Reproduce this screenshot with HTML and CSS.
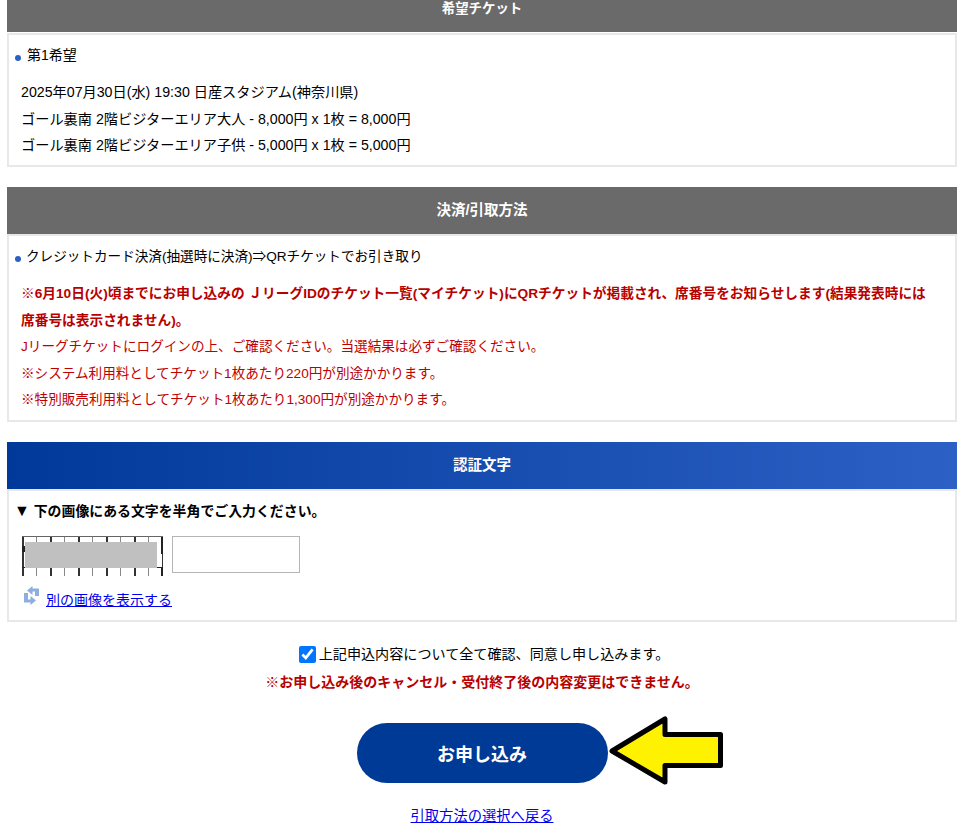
FILE: index.html
```html
<!DOCTYPE html>
<html lang="ja">
<head>
<meta charset="utf-8">
<title>申し込み確認</title>
<link rel="stylesheet" href="styles.css">
</head>
<body>
<main class="page">
  <section class="section">
    <h2 class="head head-narrow">希望チケット</h2>
    <div class="panel panel-ticket">
      <p class="bullet">第1希望</p>
      <div class="detail">
        <p>2025年07月30日(水) 19:30 日産スタジアム(神奈川県)</p>
        <p>ゴール裏南 2階ビジターエリア大人 - 8,000円 x 1枚 = 8,000円</p>
        <p>ゴール裏南 2階ビジターエリア子供 - 5,000円 x 1枚 = 5,000円</p>
      </div>
    </div>
  </section>
  <section class="section">
    <h2 class="head head-wide">決済/引取方法</h2>
    <div class="panel panel-pay">
      <p class="bullet bullet-small">クレジットカード決済(抽選時に決済)⇒QRチケットでお引き取り</p>
      <div class="notes">
        <p class="strong">※6月10日(火)頃までにお申し込みの ＪリーグIDのチケット一覧(マイチケット)にQRチケットが掲載され、席番号をお知らせします(結果発表時には席番号は表示されません)。</p>
        <p>Jリーグチケットにログインの上、ご確認ください。当選結果は必ずご確認ください。</p>
        <p>※システム利用料としてチケット1枚あたり220円が別途かかります。</p>
        <p>※特別販売利用料としてチケット1枚あたり1,300円が別途かかります。</p>
      </div>
    </div>
  </section>
  <section class="section">
    <h2 class="head head-wide head-blue">認証文字</h2>
    <div class="panel panel-captcha">
      <p class="captcha-title"><span class="tri">▼</span> 下の画像にある文字を半角でご入力ください。</p>
      <div class="captcha-row">
        <div class="captcha-img"><div class="captcha-mask"></div></div>
        <input class="captcha-input" type="text" aria-label="認証文字">
      </div>
      <div class="reload">
        <svg class="reload-icon" width="15" height="19" viewBox="0 0 15 19" aria-hidden="true">
          <path fill="#8eaee0" d="M15 10H11V5.500H8.500V9L3 4.500L8.500 0V2.500H15Z"/>
          <path fill="#8eaee0" d="M0 7H4V13.500H6.500V10L12 14.500L6.500 19V16.500H0Z"/>
        </svg>
        <a href="#">別の画像を表示する</a>
      </div>
    </div>
  </section>
  <div class="confirm">
    <label class="agree"><input type="checkbox" checked>上記申込内容について全て確認、同意し申し込みます。</label>
    <p class="warn">※お申し込み後のキャンセル・受付終了後の内容変更はできません。</p>
    <div class="submit-row">
      <button class="submit" type="button">お申し込み</button>
      <svg class="arrow" width="118" height="72" viewBox="0 0 118 72" aria-hidden="true">
        <path d="M5 36L58 4V19.500H113.500V50.500H58V67Z" fill="#fff200" stroke="#000" stroke-width="5" stroke-linejoin="round"/>
      </svg>
    </div>
    <a class="back" href="#">引取方法の選択へ戻る</a>
  </div>
</main>
</body>
</html>
```
FILE: styles.css
```css
* { box-sizing: border-box; }
html, body { margin: 0; padding: 0; background: #fff; overflow: hidden; height: 100%; }
body {
  font-family: "Liberation Sans", "Noto Sans CJK JP", sans-serif;
  font-size: 14px;
  color: #000;
}
p { margin: 0; }
.page { margin: -15px 10px 0 7px; }
.section { margin-bottom: 20px; }
.head {
  margin: 0;
  height: 47px;
  line-height: 46px;
  background: #6a6a6a;
  color: #fff;
  font-size: 14px;
  font-weight: bold;
  text-align: center;
}
.head-narrow { font-size: 13.400px; line-height: 47px; }
.head-wide { font-size: 14.500px; }
.head-blue { background: linear-gradient(90deg, #00399a 0%, #2d60c4 100%); }
.panel { border: 2px solid #e8e8e8; background: #fff; padding: 0 6px; }
.section:first-child .panel { margin-top: 1px; }
.panel-ticket { height: 134px; padding-top: 8px; }
.panel-pay { height: 188px; padding-top: 8px; }
.panel-captcha { height: 133px; padding-top: 8px; }
.bullet { line-height: 24px; padding-left: 12px; position: relative; }
.bullet-small { font-size: 13.600px; padding-left: 11px; line-height: 26px; }
.bullet::before {
  content: "";
  position: absolute;
  left: 0;
  top: 12px;
  width: 6px;
  height: 6px;
  border-radius: 50%;
  background: #2d60c4;
}
.detail { margin-top: 12px; padding-left: 6px; line-height: 26.500px; font-size: 14.200px; }
.notes { margin-top: 11px; padding-left: 6px; line-height: 26.500px; font-size: 13.600px; color: #c00000; }
.strong { font-weight: bold; font-size: 13.700px; color: #b80000; padding-right: 15px; }
.captcha-title { font-weight: bold; line-height: 24px; font-size: 13.900px; }
.tri { font-size: 16px; line-height: 1; margin-left: -1px; }
.captcha-row { display: flex; gap: 10px; margin-top: 13px; padding-left: 7px; }
.captcha-img {
  width: 141px;
  height: 40px;
  padding: 5px 0 0 3px;
  background:
    linear-gradient(#222, #222) right top / 2px 17px no-repeat,
    linear-gradient(#222, #222) right bottom / 2px 9px no-repeat,
    linear-gradient(#222, #222) right 0 bottom 8px / 8px 1px no-repeat,
    linear-gradient(#222, #222) left 0 bottom 8px / 3px 1px no-repeat,
    linear-gradient(#222, #222) left 0 top 9px / 3px 6px no-repeat,
    repeating-linear-gradient(90deg, #333 0 2px, #fff 2px 14px, #888 14px 15px, #fff 15px 28px);
  border-top: 1px solid #666;
}
.captcha-mask { width: 132px; height: 26px; background: #c0c0c0; }
.captcha-input { width: 128px; height: 37px; border: 1px solid #b5b5b5; background: #fff; padding: 0; margin-left: -1px; }
.reload { display: flex; align-items: flex-end; gap: 7px; margin-top: 10px; padding-left: 9px; }
.reload-icon { display: block; margin-bottom: 4px; }
a { color: #0000ee; text-decoration: underline; }
.confirm { display: flex; flex-direction: column; align-items: center; }
.agree { display: flex; align-items: center; gap: 3px; line-height: 24px; font-size: 14.100px; margin-left: 4px; }
.agree input { width: 17px; height: 17px; margin: 0; accent-color: #0075ff; }
.warn { margin-top: 4px; line-height: 24px; font-weight: bold; color: #b80000; }
.submit-row { position: relative; margin-top: 29px; }
.submit {
  display: block;
  width: 251px;
  height: 60px;
  border: 0;
  border-radius: 30px;
  background: #003a97;
  color: #fff;
  font: bold 18px "Liberation Sans", "Noto Sans CJK JP", sans-serif;
}
.arrow { position: absolute; left: 250px; top: -8px; }
.back { margin-top: 21px; line-height: 24px; font-size: 14.300px; }
```
